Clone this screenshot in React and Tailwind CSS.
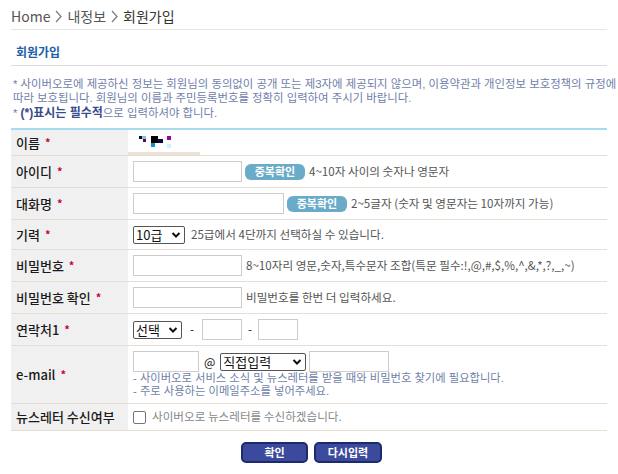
import React from "react";

const font = { fontFamily: '"Noto Sans CJK KR", "Noto Sans", sans-serif' };
const noteFont = { fontFamily: '"Liberation Sans", "Noto Sans CJK KR", sans-serif' };

function Star() {
  return <span className="ml-[5px] text-[11px] font-bold text-[#c8004a]">*</span>;
}

function Chevron() {
  return (
    <svg width="10" height="8" viewBox="0 0 10 8" className="shrink-0">
      <path d="M1.5 2 L5 5.5 L8.5 2" fill="none" stroke="#111" strokeWidth="2" />
    </svg>
  );
}

function FakeSelect({ label, width }) {
  return (
    <div
      className={`flex h-[18px] items-center justify-between rounded-[2px] border border-[#555] bg-white pl-[2px] pr-[3px] text-[13px] leading-none text-[#111] ${width}`}
    >
      <span>{label}</span>
      <Chevron />
    </div>
  );
}

function Input({ width }) {
  return <div className={`h-[21px] border border-[#ccc] bg-white ${width}`} />;
}

function CheckBtn() {
  return (
    <div className="flex h-[16px] w-[60px] items-center justify-center rounded-[6px] bg-[#6aabc9] text-[11px] font-bold text-white">
      중복확인
    </div>
  );
}

function Row({ label, star, height, children }) {
  return (
    <div className={`grid grid-cols-[117px_1fr] border-b border-[#e8ddd0] ${height}`}>
      <div className="flex items-center bg-[#f0f0f0] pl-[5px] text-[13px] font-medium text-[#1a1a1a]">
        {label}
        {star && <Star />}
      </div>
      <div className="flex items-center pl-[5px] text-[11.6px] text-[#555]">{children}</div>
    </div>
  );
}

export default function App() {
  return (
    <div style={font} className="h-[474px] w-[618px] bg-white px-[11px]">
      {/* breadcrumb */}
      <div className="flex h-[30px] items-center gap-[5px] border-b border-[#e6e6e6] pt-[4px] text-[14px] text-[#555]">
        <span>Home</span>
        <svg width="7" height="13" viewBox="0 0 7 13">
          <path d="M1 1 L6 6.5 L1 12" fill="none" stroke="#777" strokeWidth="1.2" />
        </svg>
        <span>내정보</span>
        <svg width="7" height="13" viewBox="0 0 7 13">
          <path d="M1 1 L6 6.5 L1 12" fill="none" stroke="#777" strokeWidth="1.2" />
        </svg>
        <span className="text-[#333]">회원가입</span>
      </div>

      {/* title */}
      <div className="flex h-[36px] items-center border-b border-[#dcdcdc] pl-[5px] pt-[9px] text-[12px] font-bold text-[#1d5ea6]">
        회원가입
      </div>

      {/* notes */}
      <div style={noteFont} className="pl-[2px] pt-[11px] text-[11.4px] leading-[14px] text-[#7080ac]">
        <p className="whitespace-nowrap">
          * 사이버오로에 제공하신 정보는 회원님의 동의없이 공개 또는 제3자에 제공되지 않으며, 이용약관과 개인정보 보호정책의 규정에
        </p>
        <p className="whitespace-nowrap">
          따라 보호됩니다. 회원님의 이름과 주민등록번호를 정확히 입력하여 주시기 바랍니다.
        </p>
        <p className="mt-[1px] whitespace-nowrap">
          * <span className="text-[12px] font-bold text-[#3a4a8a]">(*)표시는 필수적</span>으로 입력하셔야 합니다.
        </p>
      </div>

      {/* form table */}
      <div className="mt-[8px] border-t-2 border-[#a9dbf0]">
        <Row label="이름" star height="h-[26px]">
          <div className="flex h-full flex-col justify-between">
            <svg width="40" height="16" viewBox="0 0 40 16" className="mt-[5px] ml-[3px]">
              <rect x="3" y="1" width="3" height="3" fill="#111" />
              <rect x="6" y="1" width="4" height="3" fill="#7cc0f0" />
              <rect x="7" y="4" width="3" height="3" fill="#4a1050" />
              <rect x="15" y="1" width="7" height="7" fill="#000" />
              <rect x="15" y="8" width="4" height="4" fill="#1090d8" />
              <rect x="22" y="4" width="5" height="4" fill="#0a0a40" />
              <rect x="31" y="1" width="4" height="4" fill="#8a0a9a" />
              <rect x="31" y="9" width="4" height="4" fill="#c0f8ff" />
            </svg>
            <div className="-ml-[5px] h-[3px] w-[72px] bg-[#ebe3da]" />
          </div>
        </Row>
        <Row label="아이디" star height="h-[32px]">
          <Input width="w-[109px]" />
          <div className="ml-[3px]">
            <CheckBtn />
          </div>
          <span className="ml-[4px]">4~10자 사이의 숫자나 영문자</span>
        </Row>
        <Row label="대화명" star height="h-[32px]">
          <Input width="w-[151px]" />
          <div className="ml-[3px]">
            <CheckBtn />
          </div>
          <span className="ml-[4px]">2~5글자 (숫자 및 영문자는 10자까지 가능)</span>
        </Row>
        <Row label="기력" star height="h-[30px]">
          <FakeSelect label="10급" width="w-[52px]" />
          <span className="ml-[6px]">25급에서 4단까지 선택하실 수 있습니다.</span>
        </Row>
        <Row label="비밀번호" star height="h-[32px]">
          <Input width="w-[109px]" />
          <span className="ml-[4px]">8~10자리 영문,숫자,특수문자 조합(특문 필수:!,@,#,$,%,^,&amp;,*,?,_,~)</span>
        </Row>
        <Row label="비밀번호 확인" star height="h-[32px]">
          <Input width="w-[109px]" />
          <span className="ml-[4px]">비밀번호를 한번 더 입력하세요.</span>
        </Row>
        <Row label="연락처1" star height="h-[32px]">
          <FakeSelect label="선택" width="w-[49px]" />
          <span className="mx-[8px] text-[#111]">-</span>
          <Input width="w-[40px]" />
          <span className="mx-[6px] text-[#111]">-</span>
          <Input width="w-[40px]" />
        </Row>
        <Row label="e-mail" star height="h-[58px]">
          <div className="flex flex-col">
            <div className="flex items-center">
              <Input width="w-[66px]" />
              <span className="mx-[5px] text-[12px] text-[#111]">@</span>
              <FakeSelect label="직접입력" width="w-[86px]" />
              <div className="ml-[3px]">
                <Input width="w-[80px]" />
              </div>
            </div>
            <div style={noteFont} className="text-[11.3px] leading-[13px] text-[#6f7fa8]">
              <p>- 사이버오로 서비스 소식 및 뉴스레터를 받을 때와 비밀번호 찾기에 필요합니다.</p>
              <p>- 주로 사용하는 이메일주소를 넣어주세요.</p>
            </div>
          </div>
        </Row>
        <Row label="뉴스레터 수신여부" height="h-[27px]">
          <div className="h-[13px] w-[13px] rounded-[2px] border border-[#767676] bg-white" />
          <span className="ml-[6px] text-[#888]">사이버오로 뉴스레터를 수신하겠습니다.</span>
        </Row>
      </div>

      {/* buttons */}
      <div className="mt-[11px] flex justify-center gap-[6px] pl-[5px]">
        <button className="h-[21px] w-[67px] rounded-[5px] border-2 border-[#1e2a6e] bg-[#3b4a9c] text-[11px] font-bold text-white">
          확인
        </button>
        <button className="h-[21px] w-[68px] rounded-[5px] border-2 border-[#1e2a6e] bg-[#3b4a9c] text-[11px] font-bold text-white">
          다시입력
        </button>
      </div>
    </div>
  );
}
